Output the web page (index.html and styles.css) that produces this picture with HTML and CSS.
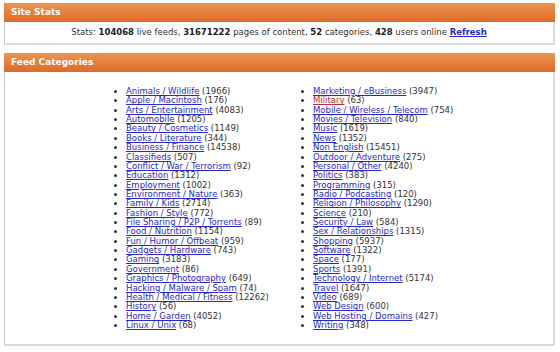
FILE: index.html
```html
<!DOCTYPE html>
<html>
<head>
<meta charset="utf-8">
<link rel="stylesheet" href="styles.css">
</head>
<body>
<div class="page">
  <section class="panel">
    <h2 class="panel-head">Site Stats</h2>
    <div class="panel-body stats">
      Stats: <b>104068</b> live feeds, <b>31671222</b> pages of content, <b>52</b> categories, <b>428</b> users online <a href="#" class="refresh">Refresh</a>
    </div>
  </section>
  <section class="panel">
    <h2 class="panel-head">Feed Categories</h2>
    <div class="panel-body cats">
      <ul class="col">
        <li><a href="#">Animals / Wildlife</a> (1966)</li>
        <li><a href="#">Apple / Macintosh</a> (176)</li>
        <li><a href="#">Arts / Entertainment</a> (4083)</li>
        <li><a href="#">Automobile</a> (1205)</li>
        <li><a href="#">Beauty / Cosmetics</a> (1149)</li>
        <li><a href="#">Books / Literature</a> (344)</li>
        <li><a href="#">Business / Finance</a> (14538)</li>
        <li><a href="#">Classifieds</a> (507)</li>
        <li><a href="#">Conflict / War / Terrorism</a> (92)</li>
        <li><a href="#">Education</a> (1312)</li>
        <li><a href="#">Employment</a> (1002)</li>
        <li><a href="#">Environment / Nature</a> (363)</li>
        <li><a href="#">Family / Kids</a> (2714)</li>
        <li><a href="#">Fashion / Style</a> (772)</li>
        <li><a href="#">File Sharing / P2P / Torrents</a> (89)</li>
        <li><a href="#">Food / Nutrition</a> (1154)</li>
        <li><a href="#">Fun / Humor / Offbeat</a> (959)</li>
        <li><a href="#">Gadgets / Hardware</a> (743)</li>
        <li><a href="#">Gaming</a> (3183)</li>
        <li><a href="#">Government</a> (86)</li>
        <li><a href="#">Graphics / Photography</a> (649)</li>
        <li><a href="#">Hacking / Malware / Spam</a> (74)</li>
        <li><a href="#">Health / Medical / Fitness</a> (12262)</li>
        <li><a href="#">History</a> (56)</li>
        <li><a href="#">Home / Garden</a> (4052)</li>
        <li><a href="#">Linux / Unix</a> (68)</li>
      </ul>
      <ul class="col">
        <li><a href="#">Marketing / eBusiness</a> (3947)</li>
        <li><a href="#" class="visited">Military</a> (63)</li>
        <li><a href="#">Mobile / Wireless / Telecom</a> (754)</li>
        <li><a href="#">Movies / Television</a> (840)</li>
        <li><a href="#">Music</a> (1619)</li>
        <li><a href="#">News</a> (1352)</li>
        <li><a href="#">Non English</a> (15451)</li>
        <li><a href="#">Outdoor / Adventure</a> (275)</li>
        <li><a href="#">Personal / Other</a> (4240)</li>
        <li><a href="#">Politics</a> (383)</li>
        <li><a href="#">Programming</a> (315)</li>
        <li><a href="#">Radio / Podcasting</a> (120)</li>
        <li><a href="#">Religion / Philosophy</a> (1290)</li>
        <li><a href="#">Science</a> (210)</li>
        <li><a href="#">Security / Law</a> (584)</li>
        <li><a href="#">Sex / Relationships</a> (1315)</li>
        <li><a href="#">Shopping</a> (5937)</li>
        <li><a href="#">Software</a> (1322)</li>
        <li><a href="#">Space</a> (177)</li>
        <li><a href="#">Sports</a> (1391)</li>
        <li><a href="#">Technology / Internet</a> (5174)</li>
        <li><a href="#">Travel</a> (1647)</li>
        <li><a href="#">Video</a> (689)</li>
        <li><a href="#">Web Design</a> (600)</li>
        <li><a href="#">Web Hosting / Domains</a> (427)</li>
        <li><a href="#">Writing</a> (348)</li>
      </ul>
    </div>
  </section>
</div>
</body>
</html>
```

FILE: styles.css
```css
html, body {
  margin: 0;
  padding: 0;
  background: #ffffff;
}
body {
  font-family: "DejaVu Sans", Verdana, sans-serif;
  font-size: 8.5px;
  color: #333333;
}
.page {
  padding: 3px 5px 0 4px;
  display: flex;
  flex-direction: column;
  gap: 8px;
}
.panel {
  display: flex;
  flex-direction: column;
}
.panel-head {
  margin: 0;
  height: 19px;
  line-height: 19px;
  padding-left: 7px;
  font-size: 9px;
  font-weight: bold;
  color: #ffffff;
  background: linear-gradient(to bottom, #eb9650 0%, #e57f3c 50%, #dd6a28 100%);
}
.panel-body {
  background: #ffffff;
  border-left: 1px solid #c8c8c8;
  border-right: 2px solid #dcdcdc;
  border-bottom: 2px solid #dcdcdc;
}
.stats {
  height: 21px;
  line-height: 21px;
  text-align: center;
}
.stats b {
  color: #222222;
}
a {
  color: #2a2acc;
}
a.refresh {
  font-weight: bold;
}
a.visited {
  color: #c03030;
}
.cats {
  display: grid;
  grid-template-columns: 187px 187px;
  justify-content: center;
  padding: 15px 0 14px;
}
.col {
  margin: 0;
  padding-left: 34px;
  list-style: disc;
}
.col li {
  line-height: 9.36px;
  height: 9.36px;
  white-space: nowrap;
}
```
